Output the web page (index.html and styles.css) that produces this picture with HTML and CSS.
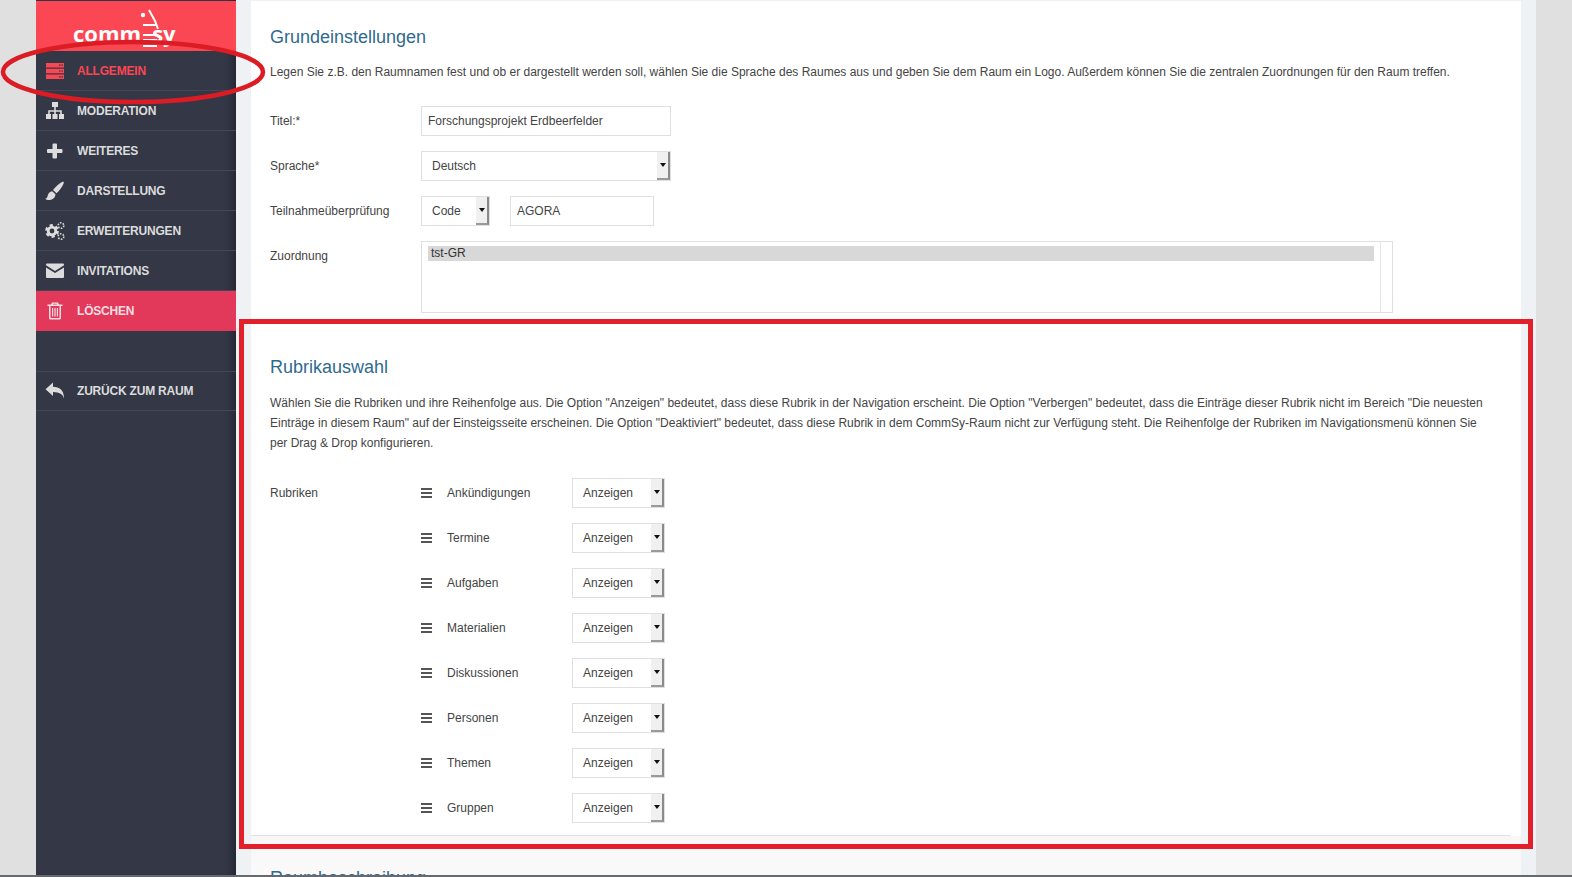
FILE: index.html
```html
<!DOCTYPE html>
<html>
<head>
  <title>CommSy Raumeinstellungen</title>
  <meta charset="UTF-8">
  <link rel="stylesheet" href="styles.css">
</head>
<body>
  <div class="page">

    <!-- Sidebar -->
    <div class="sidebar">
      <div class="logo">
        <svg class="logo-figure" width="30" height="44" viewBox="0 0 30 44">
          <circle cx="4" cy="10" r="2.2" fill="#fff"/>
          <path d="M10 5 L16 16 L19 24 M4 20 L18 20 M4 30 L18 30 M4 35 L18 35 M4 41 L18 41" stroke="#fff" stroke-width="2" fill="none"/>
        </svg>
        <span class="logo-text">comm</span><span class="logo-text logo-sy">sy</span>
      </div>

      <a class="nav-item active">
        <svg class="nav-icon" viewBox="0 0 20 20" width="20" height="20"><path fill="currentColor" d="M1 2h18v4.4H1zM1 7.8h18v4.4H1zM1 13.6h18V18H1z"/><path fill="#333746" d="M14 3.6h1.6v1.2H14zM16.4 3.6H18v1.2h-1.6zM14 9.4h1.6v1.2H14zM16.4 9.4H18v1.2h-1.6zM14 15.2h1.6v1.2H14zM16.4 15.2H18v1.2h-1.6z"/></svg>
        ALLGEMEIN
      </a>
      <a class="nav-item">
        <svg class="nav-icon" viewBox="0 0 20 20" width="20" height="20"><path fill="currentColor" d="M7 1h6v5H7zM1 13h5v5H1zM7.500 13h5v5h-5zM14 13h5v5h-5zM9.200 6h1.600v3.200h6v3.800h-1.600v-2.300h-4.400V13H9.200v-2.300H4.800V13H3.200V9.200h6z"/></svg>
        MODERATION
      </a>
      <a class="nav-item">
        <svg class="nav-icon" viewBox="0 0 20 20" width="20" height="20"><path fill="currentColor" d="M7.500 3.500a1 1 0 0 1 1-1h2.500a1 1 0 0 1 1 1V8h4.500a1 1 0 0 1 1 1v2a1 1 0 0 1-1 1H12v4.500a1 1 0 0 1-1 1H8.500a1 1 0 0 1-1-1V12H3a1 1 0 0 1-1-1V9a1 1 0 0 1 1-1h4.500z"/></svg>
        WEITERES
      </a>
      <a class="nav-item">
        <svg class="nav-icon" viewBox="0 0 20 20" width="20" height="20"><path fill="currentColor" d="M18 .5c.8.3 1 1 .6 1.900C17 6 14.500 9.500 11.500 12.200L8 9C10.800 5.500 14.500 2 18 .5zM7.200 10.200l3.300 3c-.2 3-2.500 5.800-6.500 5.800-1.600 0-3-.4-4-1.200 1.800-.4 2.300-1.300 2.600-2.800.4-2.500 2.200-4.500 4.600-4.800z"/></svg>
        DARSTELLUNG
      </a>
      <a class="nav-item">
        <svg class="nav-icon" viewBox="0 0 20 20" width="20" height="20">
          <circle cx="7" cy="10" r="5.400" fill="none" stroke="currentColor" stroke-width="3" stroke-dasharray="3 2.650"/>
          <circle cx="7" cy="10" r="3.800" fill="none" stroke="currentColor" stroke-width="2.800"/>
          <circle cx="16" cy="4.500" r="2.800" fill="none" stroke="currentColor" stroke-width="1.600" stroke-dasharray="1.600 1.330"/>
          <circle cx="16" cy="15.500" r="2.800" fill="none" stroke="currentColor" stroke-width="1.600" stroke-dasharray="1.600 1.330"/>
        </svg>
        ERWEITERUNGEN
      </a>
      <a class="nav-item">
        <svg class="nav-icon" viewBox="0 0 20 20" width="20" height="20"><path fill="currentColor" d="M1 3.500a1 1 0 0 1 1-1h16a1 1 0 0 1 1 1v.8l-9 5.700-9-5.700zM1 6.500l9 5.600 9-5.600V16a1 1 0 0 1-1 1H2a1 1 0 0 1-1-1z"/></svg>
        INVITATIONS
      </a>
      <a class="nav-item danger">
        <svg class="nav-icon" viewBox="0 0 20 20" width="20" height="20"><path fill="currentColor" fill-rule="evenodd" d="M7 1.500h6l1 2h3.500V5H16v12a1.500 1.500 0 0 1-1.500 1.500h-9A1.500 1.500 0 0 1 4 17V5H2.500V3.500H6zM8 3.500h4l-.4-.8H8.400zM5.500 5v12h9V5zM7 7h1.200v8.500H7zM9.400 7h1.200v8.500H9.400zM11.800 7H13v8.500h-1.200z"/></svg>
        LÖSCHEN
      </a>
      <div class="nav-gap"></div>
      <a class="nav-item back">
        <svg class="nav-icon" viewBox="0 0 20 20" width="20" height="20"><path fill="currentColor" d="M8 1.500v4.300c6.500.3 11 3 11 11.700-1.200-4.500-4.500-6.300-11-6.500V15L.5 8.200z"/></svg>
        ZURÜCK ZUM RAUM
      </a>
    </div>

    <!-- Content -->
    <div class="main">
      <div class="panel">

        <div class="section general">
          <h2>Grundeinstellungen</h2>
          <p class="intro">Legen Sie z.B. den Raumnamen fest und ob er dargestellt werden soll, wählen Sie die Sprache des Raumes aus und geben Sie dem Raum ein Logo. Außerdem können Sie die zentralen Zuordnungen für den Raum treffen.</p>

          <div class="form-row">
            <label>Titel:*</label>
            <div class="field title-field">Forschungsprojekt Erdbeerfelder</div>
          </div>
          <div class="form-row">
            <label>Sprache*</label>
            <div class="select lang-select">Deutsch<span class="arrow"></span></div>
          </div>
          <div class="form-row">
            <label>Teilnahmeüberprüfung</label>
            <div class="select code-select">Code<span class="arrow"></span></div>
            <div class="field code-field">AGORA</div>
          </div>
          <div class="form-row">
            <label>Zuordnung</label>
            <div class="listbox">
              <div class="listbox-items"><div class="listbox-option">tst-GR</div></div>
              <div class="listbox-scroll"></div>
            </div>
          </div>
        </div>

        <div class="section rubrics">
          <h2>Rubrikauswahl</h2>
          <p class="description">Wählen Sie die Rubriken und ihre Reihenfolge aus. Die Option "Anzeigen" bedeutet, dass diese Rubrik in der Navigation erscheint. Die Option "Verbergen" bedeutet, dass die Einträge dieser Rubrik nicht im Bereich "Die neuesten Einträge in diesem Raum" auf der Einsteigsseite erscheinen. Die Option "Deaktiviert" bedeutet, dass diese Rubrik in dem CommSy-Raum nicht zur Verfügung steht. Die Reihenfolge der Rubriken im Navigationsmenü können Sie per Drag &amp; Drop konfigurieren.</p>

          <div class="form-row">
            <label>Rubriken</label>
            <div class="rubric-list">
              <div class="rubric"><span class="handle"></span><span class="rubric-name">Ankündigungen</span><div class="select rubric-select">Anzeigen<span class="arrow"></span></div></div>
              <div class="rubric"><span class="handle"></span><span class="rubric-name">Termine</span><div class="select rubric-select">Anzeigen<span class="arrow"></span></div></div>
              <div class="rubric"><span class="handle"></span><span class="rubric-name">Aufgaben</span><div class="select rubric-select">Anzeigen<span class="arrow"></span></div></div>
              <div class="rubric"><span class="handle"></span><span class="rubric-name">Materialien</span><div class="select rubric-select">Anzeigen<span class="arrow"></span></div></div>
              <div class="rubric"><span class="handle"></span><span class="rubric-name">Diskussionen</span><div class="select rubric-select">Anzeigen<span class="arrow"></span></div></div>
              <div class="rubric"><span class="handle"></span><span class="rubric-name">Personen</span><div class="select rubric-select">Anzeigen<span class="arrow"></span></div></div>
              <div class="rubric"><span class="handle"></span><span class="rubric-name">Themen</span><div class="select rubric-select">Anzeigen<span class="arrow"></span></div></div>
              <div class="rubric"><span class="handle"></span><span class="rubric-name">Gruppen</span><div class="select rubric-select">Anzeigen<span class="arrow"></span></div></div>
            </div>
          </div>
        </div>

        <div class="section next-section">
          <h2>Raumbeschreibung</h2>
        </div>

      </div>
    </div>
  </div>
  <div class="bottom-edge"></div>

  <!-- Red annotations drawn over the screenshot -->
  <svg class="mark-ellipse" width="270" height="70" viewBox="0 0 270 70">
    <ellipse cx="133" cy="35" rx="130" ry="30" fill="none" stroke="#dc1c24" stroke-width="4.500"/>
  </svg>
  <div class="mark-box"></div>
</body>
</html>
```

FILE: styles.css
```css
html, body {
  height: 100%;
}

body {
  margin: 0;
  height: 877px;
  overflow: hidden;
  position: relative;
  background: #e0e0e0;
  font-family: "Liberation Sans", Arial, sans-serif;
  font-size: 12px;
  color: #444;
}

.page {
  display: flex;
  height: 875px;
  padding-left: 36px;
  overflow: hidden;
}

.bottom-edge {
  height: 2px;
  background: #666a6c;
}

/* Sidebar */
.sidebar {
  width: 200px;
  flex-shrink: 0;
  background: #333746;
  box-shadow: inset -9px 0 8px -6px rgba(0, 0, 0, 0.35);
}

.logo {
  height: 50px;
  margin-top: 1px;
  background: #fb4653;
  position: relative;
  box-sizing: border-box;
  padding: 19px 0 0 37px;
  overflow: hidden;
}

.logo-text {
  font-family: "Open Sans", sans-serif;
  font-weight: 700;
  font-size: 22px;
  line-height: 26px;
  color: #fff;
}

.logo-sy {
  margin-left: 11px;
}

.logo-figure {
  position: absolute;
  left: 103px;
  top: 4px;
}

.nav-item {
  display: flex;
  align-items: center;
  height: 40px;
  box-sizing: border-box;
  padding-left: 9px;
  border-bottom: 1px solid #434755;
  color: #dcdcdc;
  font-size: 12px;
  font-weight: 700;
  letter-spacing: -0.2px;
}

.nav-icon {
  width: 20px;
  height: 20px;
  margin-right: 12px;
  flex-shrink: 0;
}

.nav-item.active {
  color: #fb4653;
}

.nav-item.danger {
  background: #e2395a;
  border-bottom: none;
  color: #f6dde2;
}

.nav-gap {
  height: 40px;
}

.nav-item.back {
  border-top: 1px solid #434755;
}

/* Content */
.main {
  width: 1300px;
  flex-shrink: 0;
  box-sizing: border-box;
  padding: 0 15px;
  background: #eff2f4;
}

.panel {
  height: 875px;
  margin-top: 1px;
  background: #fff;
  overflow: hidden;
}

.section {
  padding: 0 19px;
}

h2 {
  margin: 0;
  font-size: 18px;
  font-weight: 400;
  line-height: 24px;
  color: #2f6a8f;
}

.general {
  height: 319px;
  padding-top: 24px;
  box-sizing: border-box;
}

.intro {
  margin: 13px 0 24px;
  line-height: 20px;
}

.form-row {
  display: flex;
  align-items: flex-start;
  margin-bottom: 15px;
}

label {
  width: 151px;
  flex-shrink: 0;
  line-height: 30px;
}

.field, .select {
  height: 30px;
  box-sizing: border-box;
  border: 1px solid #dfdfdf;
  line-height: 28px;
  background: #fff;
}

.field {
  padding-left: 6px;
}

.select {
  position: relative;
  padding-left: 10px;
}

.arrow {
  position: absolute;
  top: 0;
  right: 0;
  bottom: 0;
  width: 13px;
  box-sizing: border-box;
  background: #f0f0f0;
  border-right: 2px solid #8a8a8a;
  border-bottom: 2px solid #9a9a9a;
}

.arrow::after {
  content: "";
  position: absolute;
  left: 3px;
  top: 11px;
  border-left: 3px solid transparent;
  border-right: 3px solid transparent;
  border-top: 4px solid #111;
}

.title-field, .lang-select {
  width: 250px;
}

.code-select {
  width: 69px;
}

.code-field {
  width: 144px;
  margin-left: 20px;
}

.listbox {
  display: flex;
  width: 972px;
  height: 72px;
  box-sizing: border-box;
  border: 1px solid #dfdfdf;
}

.listbox-items {
  flex: 1;
  padding: 4px 6px;
}

.listbox-option {
  height: 15px;
  line-height: 15px;
  padding-left: 3px;
  background: #d8d8d8;
  color: #333;
}

.listbox-scroll {
  width: 11px;
  border-left: 1px solid #e6e6e6;
}

/* Rubriken */
.rubrics {
  height: 516px;
  margin: 0 11px 0 -8px;
  padding: 35px 27px 0;
  box-sizing: border-box;
  border-bottom: 1px solid #e2e2e2;
}

.description {
  margin: 14px 0 25px;
  line-height: 20px;
}

.rubric-list {
  display: flex;
  flex-direction: column;
  gap: 15px;
}

.rubric {
  display: flex;
  align-items: center;
  height: 30px;
}

.handle {
  width: 11px;
  height: 2px;
  background: #555;
  box-shadow: 0 -4px 0 #555, 0 4px 0 #555;
  margin-right: 15px;
}

.rubric-name {
  width: 125px;
}

.rubric-select {
  width: 93px;
}

.next-section {
  padding-top: 30px;
  background: linear-gradient(#f7f7f7, #fdfdfd);
  height: 60px;
}

/* Annotations */
.mark-ellipse {
  position: absolute;
  left: 0;
  top: 37px;
}

.mark-box {
  position: absolute;
  left: 239px;
  top: 319px;
  width: 1294px;
  height: 530px;
  box-sizing: border-box;
  border: 5px solid #e3202a;
}
```
